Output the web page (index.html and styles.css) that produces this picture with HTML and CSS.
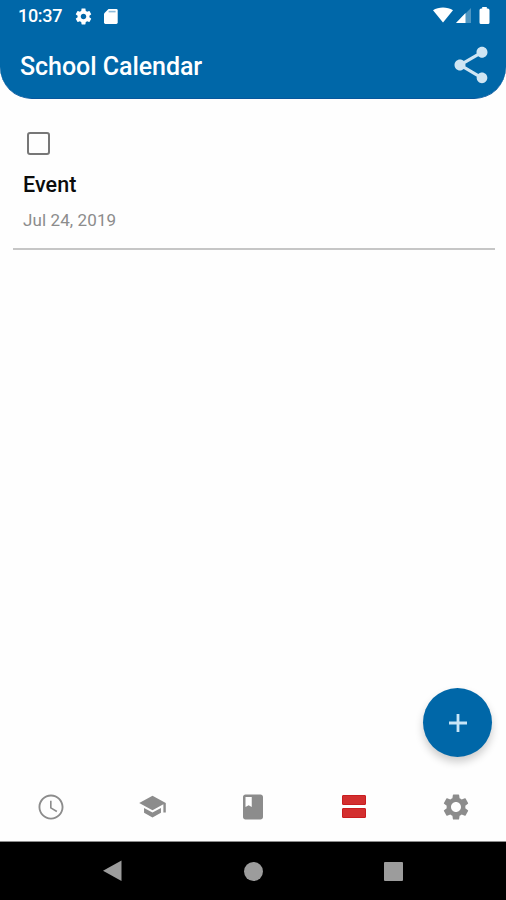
FILE: index.html
```
<!DOCTYPE html>
<html lang="en">
<head>
    <meta charset="UTF-8">
    <meta name="viewport" content="width=device-width, initial-scale=1.0">
    <title>School Calendar</title>
    <link rel="stylesheet" href="styles.css">
</head>
<body>
    <header class="header">
        <!-- Status bar -->
        <div class="status-bar">
            <span class="time">10:37</span>
            <svg class="status-gear" viewBox="0 0 24 24"><path d="M19.43 12.98c.04-.32.07-.64.07-.98s-.03-.66-.07-.98l2.11-1.65c.19-.15.24-.42.12-.64l-2-3.46c-.12-.22-.39-.3-.61-.22l-2.49 1c-.52-.4-1.08-.73-1.69-.98l-.38-2.65C14.46 2.18 14.25 2 14 2h-4c-.25 0-.46.18-.49.42l-.38 2.65c-.61.25-1.17.59-1.69.98l-2.49-1c-.23-.09-.49 0-.61.22l-2 3.46c-.13.22-.07.49.12.64l2.11 1.65c-.04.32-.07.65-.07.98s.03.66.07.98l-2.11 1.65c-.19.15-.24.42-.12.64l2 3.46c.12.22.39.3.61.22l2.49-1c.52.4 1.08.73 1.69.98l.38 2.65c.03.24.24.42.49.42h4c.25 0 .46-.18.49-.42l.38-2.65c.61-.25 1.17-.59 1.69-.98l2.49 1c.23.09.49 0 .61-.22l2-3.46c.12-.22.07-.49-.12-.64l-2.11-1.65zM12 15.5c-1.93 0-3.5-1.57-3.5-3.5s1.57-3.5 3.5-3.5 3.5 1.57 3.5 3.5-1.57 3.5-3.5 3.5z"/></svg>
            <svg class="status-card" viewBox="0 0 14 15"><path d="M4.5 0H12.3Q13.7 0 13.7 1.4V13.6Q13.7 15 12.3 15H1.4Q0 15 0 13.6V4.5z"/><path class="notch" d="M4.6 1.8h7v1.6h-7z"/></svg>
            <div class="status-right">
                <svg class="wifi" viewBox="0 0 20 16"><path d="M0 3.2C5.5-.5 14.5-.5 20 3.2L10 15.5z"/></svg>
                <svg class="signal" viewBox="0 0 15 15"><path class="faded" d="M15 0V15H0z"/><path d="M9.5 5V15H0z"/></svg>
                <svg class="battery" viewBox="0 0 11 17"><path d="M3.2 0h4.600v1.500h1q1.700 0 1.700 1.700v12.300q0 1.500-1.500 1.500h-7q-1.500 0-1.500-1.500V3.200q0-1.700 1.700-1.700h1z"/></svg>
            </div>
        </div>
        <div class="title-bar">
            <h1 class="title">School Calendar</h1>
            <svg class="share" viewBox="0 0 24 24"><path d="M18 16.08c-.76 0-1.44.3-1.96.77L8.91 12.7c.05-.23.09-.46.09-.7s-.04-.47-.09-.7l7.05-4.11c.54.5 1.25.81 2.04.81 1.66 0 3-1.34 3-3s-1.34-3-3-3-3 1.34-3 3c0 .24.04.47.09.7L8.04 9.81C7.5 9.31 6.79 9 6 9c-1.66 0-3 1.34-3 3s1.34 3 3 3c.79 0 1.5-.31 2.04-.81l7.12 4.16c-.05.21-.08.43-.08.65 0 1.61 1.31 2.92 2.92 2.92s2.92-1.31 2.92-2.92-1.31-2.92-2.92-2.92z"/></svg>
        </div>
    </header>

    <main class="events">
        <div class="event">
            <div class="checkbox"></div>
            <div class="event-name">Event</div>
            <div class="event-date">Jul 24, 2019</div>
        </div>
    </main>

    <button class="add-button" aria-label="Add event">
        <svg viewBox="0 0 18 18"><path d="M7.6 0h2.8v7.6H18v2.8h-7.600V18H7.600v-7.600H0V7.600h7.600z"/></svg>
    </button>

    <!-- Bottom tabs -->
    <nav class="tabs">
        <div class="tab"><svg viewBox="0 0 24 24"><path d="M11.99 2C6.47 2 2 6.48 2 12s4.47 10 9.99 10C17.52 22 22 17.52 22 12S17.52 2 11.99 2zM12 20.5c-4.7 0-8.5-3.8-8.5-8.5S7.3 3.5 12 3.5s8.5 3.8 8.5 8.5-3.8 8.5-8.5 8.5zM12.5 7H11.2v6l5.15 3.15.65-1.06-4.5-2.7z"/></svg></div>
        <div class="tab"><svg class="school" viewBox="0 0 24 24"><path d="M5 13.18v4L12 21l7-3.82v-4L12 17l-7-3.82zM12 3L1 9l11 6 9-4.91V17h2V9L12 3z"/></svg></div>
        <div class="tab"><svg viewBox="0 0 24 24"><path d="M18 2H6c-1.1 0-2 .9-2 2v16c0 1.1.9 2 2 2h12c1.1 0 2-.9 2-2V4c0-1.1-.9-2-2-2zM6 4h5v8l-2.500-1.500L6 12V4z"/></svg></div>
        <div class="tab active"><span class="bar"></span><span class="bar"></span></div>
        <div class="tab"><svg class="settings" viewBox="0 0 24 24"><path d="M19.43 12.98c.04-.32.07-.64.07-.98s-.03-.66-.07-.98l2.11-1.65c.19-.15.24-.42.12-.64l-2-3.46c-.12-.22-.39-.3-.61-.22l-2.49 1c-.52-.4-1.08-.73-1.69-.98l-.38-2.65C14.46 2.18 14.25 2 14 2h-4c-.25 0-.46.18-.49.42l-.38 2.65c-.61.25-1.17.59-1.69.98l-2.49-1c-.23-.09-.49 0-.61.22l-2 3.46c-.13.22-.07.49.12.64l2.11 1.65c-.04.32-.07.65-.07.98s.03.66.07.98l-2.11 1.65c-.19.15-.24.42-.12.64l2 3.46c.12.22.39.3.61.22l2.49-1c.52.4 1.08.73 1.69.98l.38 2.65c.03.24.24.42.49.42h4c.25 0 .46-.18.49-.42l.38-2.65c.61-.25 1.17-.59 1.69-.98l2.49 1c.23.09.49 0 .61-.22l2-3.46c.12-.22.07-.49-.12-.64l-2.11-1.65zM12 16c-2.2 0-4-1.8-4-4s1.8-4 4-4 4 1.8 4 4-1.8 4-4 4z"/></svg></div>
    </nav>

    <!-- Android navigation -->
    <footer class="system-nav">
        <svg viewBox="0 0 20 22"><path d="M18.5.5V21L0 10.7z"/></svg>
        <span class="home"></span>
        <span class="recent"></span>
    </footer>
</body>
</html>
```
FILE: styles.css
```
* {
    box-sizing: border-box;
}
body {
    display: flex;
    flex-direction: column;
    height: 900px;
    margin: 0;
    background-color: #fefefe;
    font-family: Roboto, sans-serif;
    overflow: hidden;
}
svg {
    display: block;
    fill: currentColor;
}
.header {
    height: 99px;
    background-color: #0067a8;
    border-bottom: 1px solid #07579d;
    border-radius: 0 0 32px 32px;
    color: #fff;
}
/* Status bar */
.status-bar {
    display: flex;
    align-items: center;
    height: 32px;
    padding: 0 16px 0 18px;
}
.time {
    width: 56px;
    font-size: 18px;
    font-weight: 500;
    line-height: 32px;
    letter-spacing: -0.3px;
}
.status-gear {
    width: 19px;
    height: 19px;
}
.status-card {
    width: 14px;
    height: 15px;
    margin-left: 11px;
}
.notch {
    fill: #8dbbd9;
}
.status-right {
    display: flex;
    align-items: center;
    margin-left: auto;
}
.wifi {
    width: 20px;
    height: 16px;
    margin-right: 3px;
    margin-top: -2px;
}
.signal {
    width: 15px;
    height: 15px;
    margin-right: 8px;
    margin-top: -1px;
}
.faded {
    fill: #4d95c2;
}
.battery {
    width: 11px;
    height: 17px;
    margin-top: -2px;
}
.title-bar {
    display: flex;
    justify-content: space-between;
    align-items: center;
    height: 66px;
    padding: 0 13px 0 20px;
}
.title {
    margin: 3px 0 0;
    font-size: 25px;
    font-weight: 500;
    line-height: 30px;
    letter-spacing: -0.05px;
}
.share {
    width: 44px;
    height: 44px;
    color: #cfe5f3;
}
/* Event list */
.events {
    flex: 1;
    padding: 33px 11px 0 13px;
}
.event {
    height: 118px;
    padding-left: 10px;
    border-bottom: 2px solid #c6c6c6;
}
.checkbox {
    width: 23px;
    height: 23px;
    margin-left: 4px;
    border: 2px solid #777;
    border-radius: 3px;
}
.event-name {
    margin-top: 17px;
    font-size: 21.5px;
    font-weight: 500;
    line-height: 25px;
    letter-spacing: 0.1px;
    color: #0c0c0c;
}
.event-date {
    margin-top: 13px;
    font-size: 17px;
    line-height: 20px;
    letter-spacing: 0.1px;
    color: #8c8c8c;
}
/* Floating button over the list */
.add-button {
    position: absolute;
    right: 14px;
    bottom: 143px;
    display: flex;
    justify-content: center;
    align-items: center;
    width: 69px;
    height: 69px;
    padding: 0;
    border: none;
    border-radius: 50%;
    background-color: #0067a8;
    box-shadow: 0 5px 8px rgba(0, 0, 0, 0.2);
    color: #c8e5f7;
}
.add-button svg {
    width: 18px;
    height: 18px;
}
.tabs {
    display: grid;
    grid-template-columns: repeat(5, 1fr);
    height: 70px;
    border-bottom: 1px solid #8d8d8d;
    color: #8c8c8c;
}
.tab {
    display: flex;
    flex-direction: column;
    justify-content: center;
    align-items: center;
}
.tab svg {
    width: 30px;
    height: 30px;
}
.tab .school {
    width: 29px;
    height: 29px;
    margin-left: 2px;
}
.tab .settings {
    margin-left: 1px;
}
.active {
    gap: 3px;
}
.bar {
    width: 24px;
    height: 10px;
    background-color: #d32f2f;
    border: 1px solid #c91d20;
    border-radius: 1px;
}
.system-nav {
    display: flex;
    justify-content: space-between;
    align-items: center;
    height: 58px;
    padding: 0 103px;
    background-color: #000;
    color: #9c9c9c;
}
.system-nav svg {
    width: 20px;
    height: 22px;
}
.home {
    width: 19px;
    height: 19px;
    border-radius: 50%;
    background-color: #9c9c9c;
}
.recent {
    width: 19px;
    height: 19px;
    border-radius: 1px;
    background-color: #9c9c9c;
}
```
